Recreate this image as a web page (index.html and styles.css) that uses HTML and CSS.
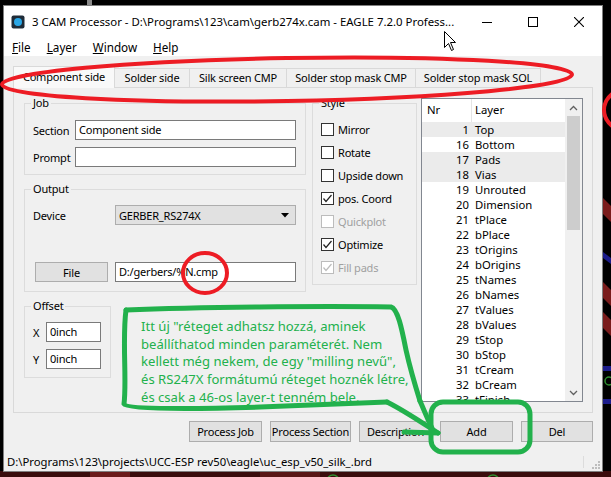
FILE: index.html
```html
<!DOCTYPE html>
<html lang="hu">
<head>
    <meta charset="UTF-8">
    <title>CAM Processor</title>
    <link rel="stylesheet" href="styles.css">
</head>
<body>

<!-- board editor showing around the dialog -->
<svg class="backdrop" width="611" height="477" viewBox="0 0 611 477">
    <rect width="611" height="477" fill="#000"/>
    <rect x="87" y="0" width="5" height="5" fill="#8a8a8a"/>
    <rect x="0" y="471" width="611" height="6" fill="#3a0c0c"/>
    <rect x="90" y="472" width="40" height="5" fill="#6b1b1b"/>
    <rect x="260" y="472" width="60" height="5" fill="#5a1616"/>
    <circle cx="333" cy="481" r="6" fill="none" stroke="#2f8f2f" stroke-width="1.5"/>
    <circle cx="493" cy="481" r="6" fill="none" stroke="#2f8f2f" stroke-width="1.5"/>
    <polygon points="603,198 611,206 611,222 603,214" fill="#7a1c1c"/>
    <polygon points="603,252 611,258 611,264 603,258" fill="#1c1c8a"/>
    <polygon points="603,282 611,290 611,306 603,298" fill="#7a1c1c"/>
    <polygon points="603,312 611,320 611,336 603,328" fill="#7a1c1c"/>
    <rect x="603" y="366" width="8" height="5" fill="#1c1c8a"/>
    <circle cx="609" cy="381" r="4" fill="none" stroke="#2f8f2f" stroke-width="1.5"/>
    <rect x="603" y="399" width="8" height="5" fill="#1c1c8a"/>
</svg>

<div class="window">
    <div class="titlebar">
        <svg class="app-icon" width="14" height="14" viewBox="0 0 14 14">
            <rect x="0.5" y="0.5" width="13" height="13" rx="2" fill="#1f2c38"/>
            <circle cx="7" cy="7" r="4" fill="#2aa7e6"/>
        </svg>
        <span class="title">3 CAM Processor - D:\Programs\123\cam\gerb274x.cam - EAGLE 7.2.0 Profess...</span>
        <div class="caption">
            <span class="cap-btn"><svg width="10" height="10" viewBox="0 0 10 10"><line x1="0" y1="5.5" x2="10" y2="5.5" stroke="#000"/></svg></span>
            <span class="cap-btn"><svg width="10" height="10" viewBox="0 0 10 10"><rect x="0.5" y="0.5" width="9" height="9" fill="none" stroke="#000"/></svg></span>
            <span class="cap-btn"><svg width="10" height="10" viewBox="0 0 10 10"><path d="M0,0 L10,10 M10,0 L0,10" stroke="#000" stroke-width="1.1"/></svg></span>
        </div>
    </div>

    <div class="menubar">
        <span class="menu"><u>F</u>ile</span>
        <span class="menu"><u>L</u>ayer</span>
        <span class="menu"><u>W</u>indow</span>
        <span class="menu"><u>H</u>elp</span>
    </div>

    <div class="main">
        <div class="tabs">
            <span class="tab tab-cmp active">Component side</span>
            <span class="tab tab-sol">Solder side</span>
            <span class="tab tab-silk">Silk screen CMP</span>
            <span class="tab tab-stop">Solder stop mask CMP</span>
            <span class="tab tab-stop-sol">Solder stop mask SOL</span>
        </div>

        <div class="pane">
            <div class="col-left">
                <fieldset class="group group-job">
                    <legend>Job</legend>
                    <div class="row first">
                        <span class="lbl lbl-job">Section</span>
                        <span class="field">Component side</span>
                    </div>
                    <div class="row">
                        <span class="lbl lbl-job">Prompt</span>
                        <span class="field"></span>
                    </div>
                </fieldset>

                <fieldset class="group group-output">
                    <legend>Output</legend>
                    <div class="row first">
                        <span class="lbl lbl-out">Device</span>
                        <span class="combo">GERBER_RS274X
                            <svg class="combo-arrow" width="8" height="5" viewBox="0 0 8 5"><polygon points="0,0 8,0 4,4.5" fill="#000"/></svg>
                        </span>
                    </div>
                    <div class="row file-row">
                        <span class="btn btn-file">File</span>
                        <span class="field">D:/gerbers/%N.cmp</span>
                    </div>
                </fieldset>

                <fieldset class="group group-offset">
                    <legend>Offset</legend>
                    <div class="row first">
                        <span class="lbl lbl-off">X</span>
                        <span class="field field-small">0inch</span>
                    </div>
                    <div class="row">
                        <span class="lbl lbl-off">Y</span>
                        <span class="field field-small">0inch</span>
                    </div>
                </fieldset>
            </div>

            <fieldset class="group group-style">
                <legend>Style</legend>
                <div class="checks">
                    <div class="check"><span class="box"></span>Mirror</div>
                    <div class="check"><span class="box"></span>Rotate</div>
                    <div class="check"><span class="box"></span>Upside down</div>
                    <div class="check"><span class="box"><svg width="11" height="11" viewBox="0 0 11 11"><polyline points="1.5,5.5 4,8.5 9.5,2" fill="none" stroke="#222" stroke-width="1.2"/></svg></span>pos. Coord</div>
                    <div class="check off"><span class="box"></span>Quickplot</div>
                    <div class="check"><span class="box"><svg width="11" height="11" viewBox="0 0 11 11"><polyline points="1.5,5.5 4,8.5 9.5,2" fill="none" stroke="#222" stroke-width="1.2"/></svg></span>Optimize</div>
                    <div class="check off"><span class="box"><svg width="11" height="11" viewBox="0 0 11 11"><polyline points="1.5,5.5 4,8.5 9.5,2" fill="none" stroke="#bcbcbc" stroke-width="1.2"/></svg></span>Fill pads</div>
                </div>
            </fieldset>

            <div class="layers">
                <div class="layers-body">
                    <div class="layers-head">
                        <span class="head-nr">Nr</span>
                        <span class="head-name">Layer</span>
                    </div>
                    <div class="layer-row sel"><span class="nr">1</span><span class="name">Top</span></div>
                    <div class="layer-row"><span class="nr">16</span><span class="name">Bottom</span></div>
                    <div class="layer-row sel"><span class="nr">17</span><span class="name">Pads</span></div>
                    <div class="layer-row sel"><span class="nr">18</span><span class="name">Vias</span></div>
                    <div class="layer-row"><span class="nr">19</span><span class="name">Unrouted</span></div>
                    <div class="layer-row"><span class="nr">20</span><span class="name">Dimension</span></div>
                    <div class="layer-row"><span class="nr">21</span><span class="name">tPlace</span></div>
                    <div class="layer-row"><span class="nr">22</span><span class="name">bPlace</span></div>
                    <div class="layer-row"><span class="nr">23</span><span class="name">tOrigins</span></div>
                    <div class="layer-row"><span class="nr">24</span><span class="name">bOrigins</span></div>
                    <div class="layer-row"><span class="nr">25</span><span class="name">tNames</span></div>
                    <div class="layer-row"><span class="nr">26</span><span class="name">bNames</span></div>
                    <div class="layer-row"><span class="nr">27</span><span class="name">tValues</span></div>
                    <div class="layer-row"><span class="nr">28</span><span class="name">bValues</span></div>
                    <div class="layer-row"><span class="nr">29</span><span class="name">tStop</span></div>
                    <div class="layer-row"><span class="nr">30</span><span class="name">bStop</span></div>
                    <div class="layer-row"><span class="nr">31</span><span class="name">tCream</span></div>
                    <div class="layer-row"><span class="nr">32</span><span class="name">bCream</span></div>
                    <div class="layer-row"><span class="nr">33</span><span class="name">tFinish</span></div>
                </div>
                <div class="vscroll">
                    <span class="sb-arrow"><svg width="9" height="6" viewBox="0 0 9 6"><polyline points="1,5 4.5,1.5 8,5" fill="none" stroke="#606060" stroke-width="1.3"/></svg></span>
                    <span class="sb-thumb"></span>
                    <span class="sb-track"></span>
                    <span class="sb-arrow"><svg width="9" height="6" viewBox="0 0 9 6"><polyline points="1,1 4.5,4.5 8,1" fill="none" stroke="#606060" stroke-width="1.3"/></svg></span>
                </div>
            </div>
        </div>

        <div class="actions">
            <span class="btn btn-job">Process Job</span>
            <span class="btn btn-section">Process Section</span>
            <span class="btn btn-desc">Description</span>
            <span class="btn btn-add">Add</span>
            <span class="btn btn-del">Del</span>
        </div>
    </div>

    <div class="statusbar">
        <span class="status-text">D:\Programs\123\projects\UCC-ESP rev50\eagle\uc_esp_v50_silk_.brd</span>
        <span class="status-sep"></span>
        <svg class="grip" width="8" height="8" viewBox="0 0 8 8">
            <rect x="6" y="0" width="2" height="2" fill="#bdbdbd"/>
            <rect x="3" y="3" width="2" height="2" fill="#bdbdbd"/>
            <rect x="6" y="3" width="2" height="2" fill="#bdbdbd"/>
            <rect x="0" y="6" width="2" height="2" fill="#bdbdbd"/>
            <rect x="3" y="6" width="2" height="2" fill="#bdbdbd"/>
            <rect x="6" y="6" width="2" height="2" fill="#bdbdbd"/>
        </svg>
    </div>
</div>

<!-- hand drawn marks on top of the dialog -->
<svg class="marks" width="611" height="477" viewBox="0 0 611 477">
    <g fill="none" stroke="#ed1c24" stroke-width="4">
        <ellipse cx="287" cy="79.5" rx="285" ry="21.5" transform="rotate(-1 287 79.5)"/>
        <ellipse cx="205" cy="273" rx="22" ry="20"/>
        <ellipse cx="636" cy="110" rx="32" ry="24"/>
    </g>
    <g fill="none" stroke="#22b14c" stroke-width="5" stroke-linecap="round" stroke-linejoin="round">
        <path d="M126,310 C200,307 320,306 391,307 C398,309 402,330 406,350 C410,368 415,385 420,401"/>
        <path d="M126,310 C122,340 127,380 124,404 C127,410 200,409 260,407 C320,405 360,403 387,402"/>
        <path d="M387,402 C405,411 424,424 438,433"/>
        <path d="M420,401 C424,410 428,420 432,428"/>
        <path d="M404,432 L438,433"/>
        <rect x="431" y="402" width="99" height="50" rx="12"/>
    </g>
</svg>

<div class="note">
    Itt új "réteget adhatsz hozzá, aminek<br>
    beállíthatod minden paraméterét. Nem<br>
    kellett még nekem, de egy "milling nevű",<br>
    és RS247X formátumú réteget hoznék létre,<br>
    és csak a 46-os layer-t tenném bele.
</div>

<svg class="cursor" width="13" height="21" viewBox="0 0 13 21">
    <path d="M0.5,0.5 L0.5,16.5 L4.5,12.5 L7.5,19.5 L9.5,18.5 L6.5,11.5 L11.5,11.5 Z" fill="#fff" stroke="#000"/>
</svg>

</body>
</html>
```

FILE: styles.css
```css
* {
    box-sizing: border-box;
    margin: 0;
    padding: 0;
}

body {
    position: relative;
    width: 611px;
    height: 477px;
    overflow: hidden;
    padding: 5px 0 0 3px;
    background: #000;
    font-family: "Noto Sans", "Open Sans", sans-serif;
    font-size: 11px;
    letter-spacing: -0.2px;
    color: #000;
}

.backdrop {
    position: absolute;
    left: 0;
    top: 0;
}

/* dialog frame */
.window {
    position: relative;
    z-index: 1;
    width: 600px;
    height: 467px;
    display: flex;
    flex-direction: column;
    background: #f0f0f0;
    border: 1px solid #7f7f7f;
}

.titlebar {
    height: 31px;
    display: flex;
    align-items: center;
    padding-left: 7px;
    background: #fff;
}

.app-icon {
    margin-right: 7px;
}

.title {
    flex: 1;
    white-space: nowrap;
    font-size: 11.4px;
    letter-spacing: 0;
    line-height: 16px;
}

.caption {
    display: flex;
    align-self: stretch;
}

.cap-btn {
    width: 46px;
    display: flex;
    align-items: center;
    justify-content: center;
}

.menubar {
    height: 19px;
    display: flex;
    align-items: center;
    background: #fff;
}

.menu {
    padding: 0 8px;
    font-size: 11.7px;
    letter-spacing: 0;
    line-height: 16px;
}

.main {
    padding: 10px 9px 0;
}

/* tabs */
.tabs {
    position: relative;
    z-index: 1;
    height: 21px;
    display: flex;
    align-items: flex-end;
}

.tab {
    height: 19px;
    line-height: 17px;
    text-align: center;
    white-space: nowrap;
    background: #f0f0f0;
    border: 1px solid #d9d9d9;
    border-bottom: none;
    margin-left: -1px;
}

.tab.active {
    height: 22px;
    line-height: 20px;
    margin-left: 0;
    margin-bottom: -1px;
    background: #f9f9f9;
}

.tab-cmp { width: 102px; }
.tab-sol { width: 76px; }
.tab-silk { width: 98px; }
.tab-stop { width: 130px; }
.tab-stop-sol { width: 126px; }

.pane {
    height: 326px;
    display: flex;
    align-items: flex-start;
    padding: 8px 9px 0 10px;
    border: 1px solid #d9d9d9;
    background: #f0f0f0;
}

.col-left {
    width: 282px;
    display: flex;
    flex-direction: column;
    gap: 7px;
}

/* group boxes */
.group {
    border: 1px solid #dcdcdc;
    padding: 0 9px 8px 8px;
    min-width: 0;
}

.group legend {
    margin-left: -2px;
    padding: 0 2px;
    line-height: 14px;
}

.group-job { padding-bottom: 7px; }
.group-output { padding-bottom: 9px; }
.group-offset { width: 87px; }

.row {
    display: flex;
    align-items: center;
    height: 20px;
    margin-top: 7px;
}

.row.first { margin-top: 10px; }
.group-output .row.first,
.group-offset .row.first { margin-top: 9px; }
.row.file-row { margin-top: 37px; }

.lbl-job { width: 42px; }
.lbl-out { width: 82px; }
.lbl-off { width: 13px; }

.field {
    width: 221px;
    height: 20px;
    padding: 0 3px;
    line-height: 18px;
    white-space: nowrap;
    background: #fff;
    border: 1px solid #7a7a7a;
}

.group-output .field { width: 181px; }
.field-small { width: 55px; }

.combo {
    width: 181px;
    height: 20px;
    display: flex;
    align-items: center;
    justify-content: space-between;
    padding: 0 6px 0 3px;
    background: #e1e1e1;
    border: 1px solid #adadad;
}

.btn {
    height: 21px;
    display: flex;
    align-items: center;
    justify-content: center;
    white-space: nowrap;
    background: #e1e1e1;
    border: 1px solid #adadad;
}

.btn-file {
    width: 73px;
    height: 20px;
    margin: 0 7px 0 2px;
}

/* style checkboxes */
.group-style {
    width: 105px;
    margin-left: 6px;
    padding-bottom: 5px;
}

.checks {
    margin-top: 8px;
}

.check {
    height: 23px;
    display: flex;
    align-items: center;
    white-space: nowrap;
}

.box {
    width: 13px;
    height: 13px;
    display: flex;
    align-items: center;
    justify-content: center;
    margin-right: 4px;
    background: #fff;
    border: 1px solid #333;
}

.check.off {
    color: #a0a0a0;
}

.check.off .box {
    border-color: #bcbcbc;
}

/* layer list */
.layers {
    width: 162px;
    height: 304px;
    margin: 2px 0 0 4px;
    display: flex;
    font-size: 11.3px;
    letter-spacing: 0;
    background: #fff;
    border: 1px solid #828790;
}

.layers-body {
    flex: 1;
    overflow: hidden;
}

.layers-head {
    height: 23px;
    display: flex;
}

.head-nr {
    width: 50px;
    padding-left: 5px;
    line-height: 22px;
    border-right: 1px solid #e5e5e5;
}

.head-name {
    padding-left: 3px;
    line-height: 22px;
}

.layer-row {
    height: 15px;
    display: flex;
    line-height: 15px;
}

.layer-row.sel {
    background: #ebebeb;
}

.nr {
    width: 47px;
    text-align: right;
}

.name {
    padding-left: 6px;
}

.vscroll {
    width: 17px;
    display: flex;
    flex-direction: column;
    background: #f0f0f0;
}

.sb-arrow {
    height: 17px;
    display: flex;
    align-items: center;
    justify-content: center;
}

.sb-thumb {
    height: 114px;
    margin: 0 2px;
    background: #cdcdcd;
}

.sb-track {
    flex: 1;
}

/* bottom buttons */
.actions {
    display: flex;
    justify-content: flex-end;
    gap: 8px;
    margin-top: 8px;
}

.btn-job { width: 73px; }
.btn-section { width: 81px; }
.btn-desc { width: 73px; }
.btn-add { width: 73px; }
.btn-del { width: 72px; }

.statusbar {
    margin-top: auto;
    height: 19px;
    display: flex;
    align-items: center;
    padding: 0 2px 0 3px;
}

.status-text {
    flex: 1;
    white-space: nowrap;
    font-size: 11.3px;
    letter-spacing: 0;
}

.status-sep {
    width: 1px;
    height: 12px;
    margin-right: 8px;
    background: #dcdcdc;
}

.grip {
    align-self: flex-end;
    margin-bottom: 2px;
}

/* annotations */
.marks {
    position: absolute;
    left: 0;
    top: 0;
    z-index: 2;
    pointer-events: none;
}

.note {
    position: absolute;
    left: 141px;
    top: 318px;
    z-index: 3;
    color: #22b14c;
    font-size: 13.1px;
    letter-spacing: 0;
    line-height: 17.7px;
    white-space: nowrap;
}

.cursor {
    position: absolute;
    left: 444px;
    top: 31px;
    z-index: 4;
}
```
